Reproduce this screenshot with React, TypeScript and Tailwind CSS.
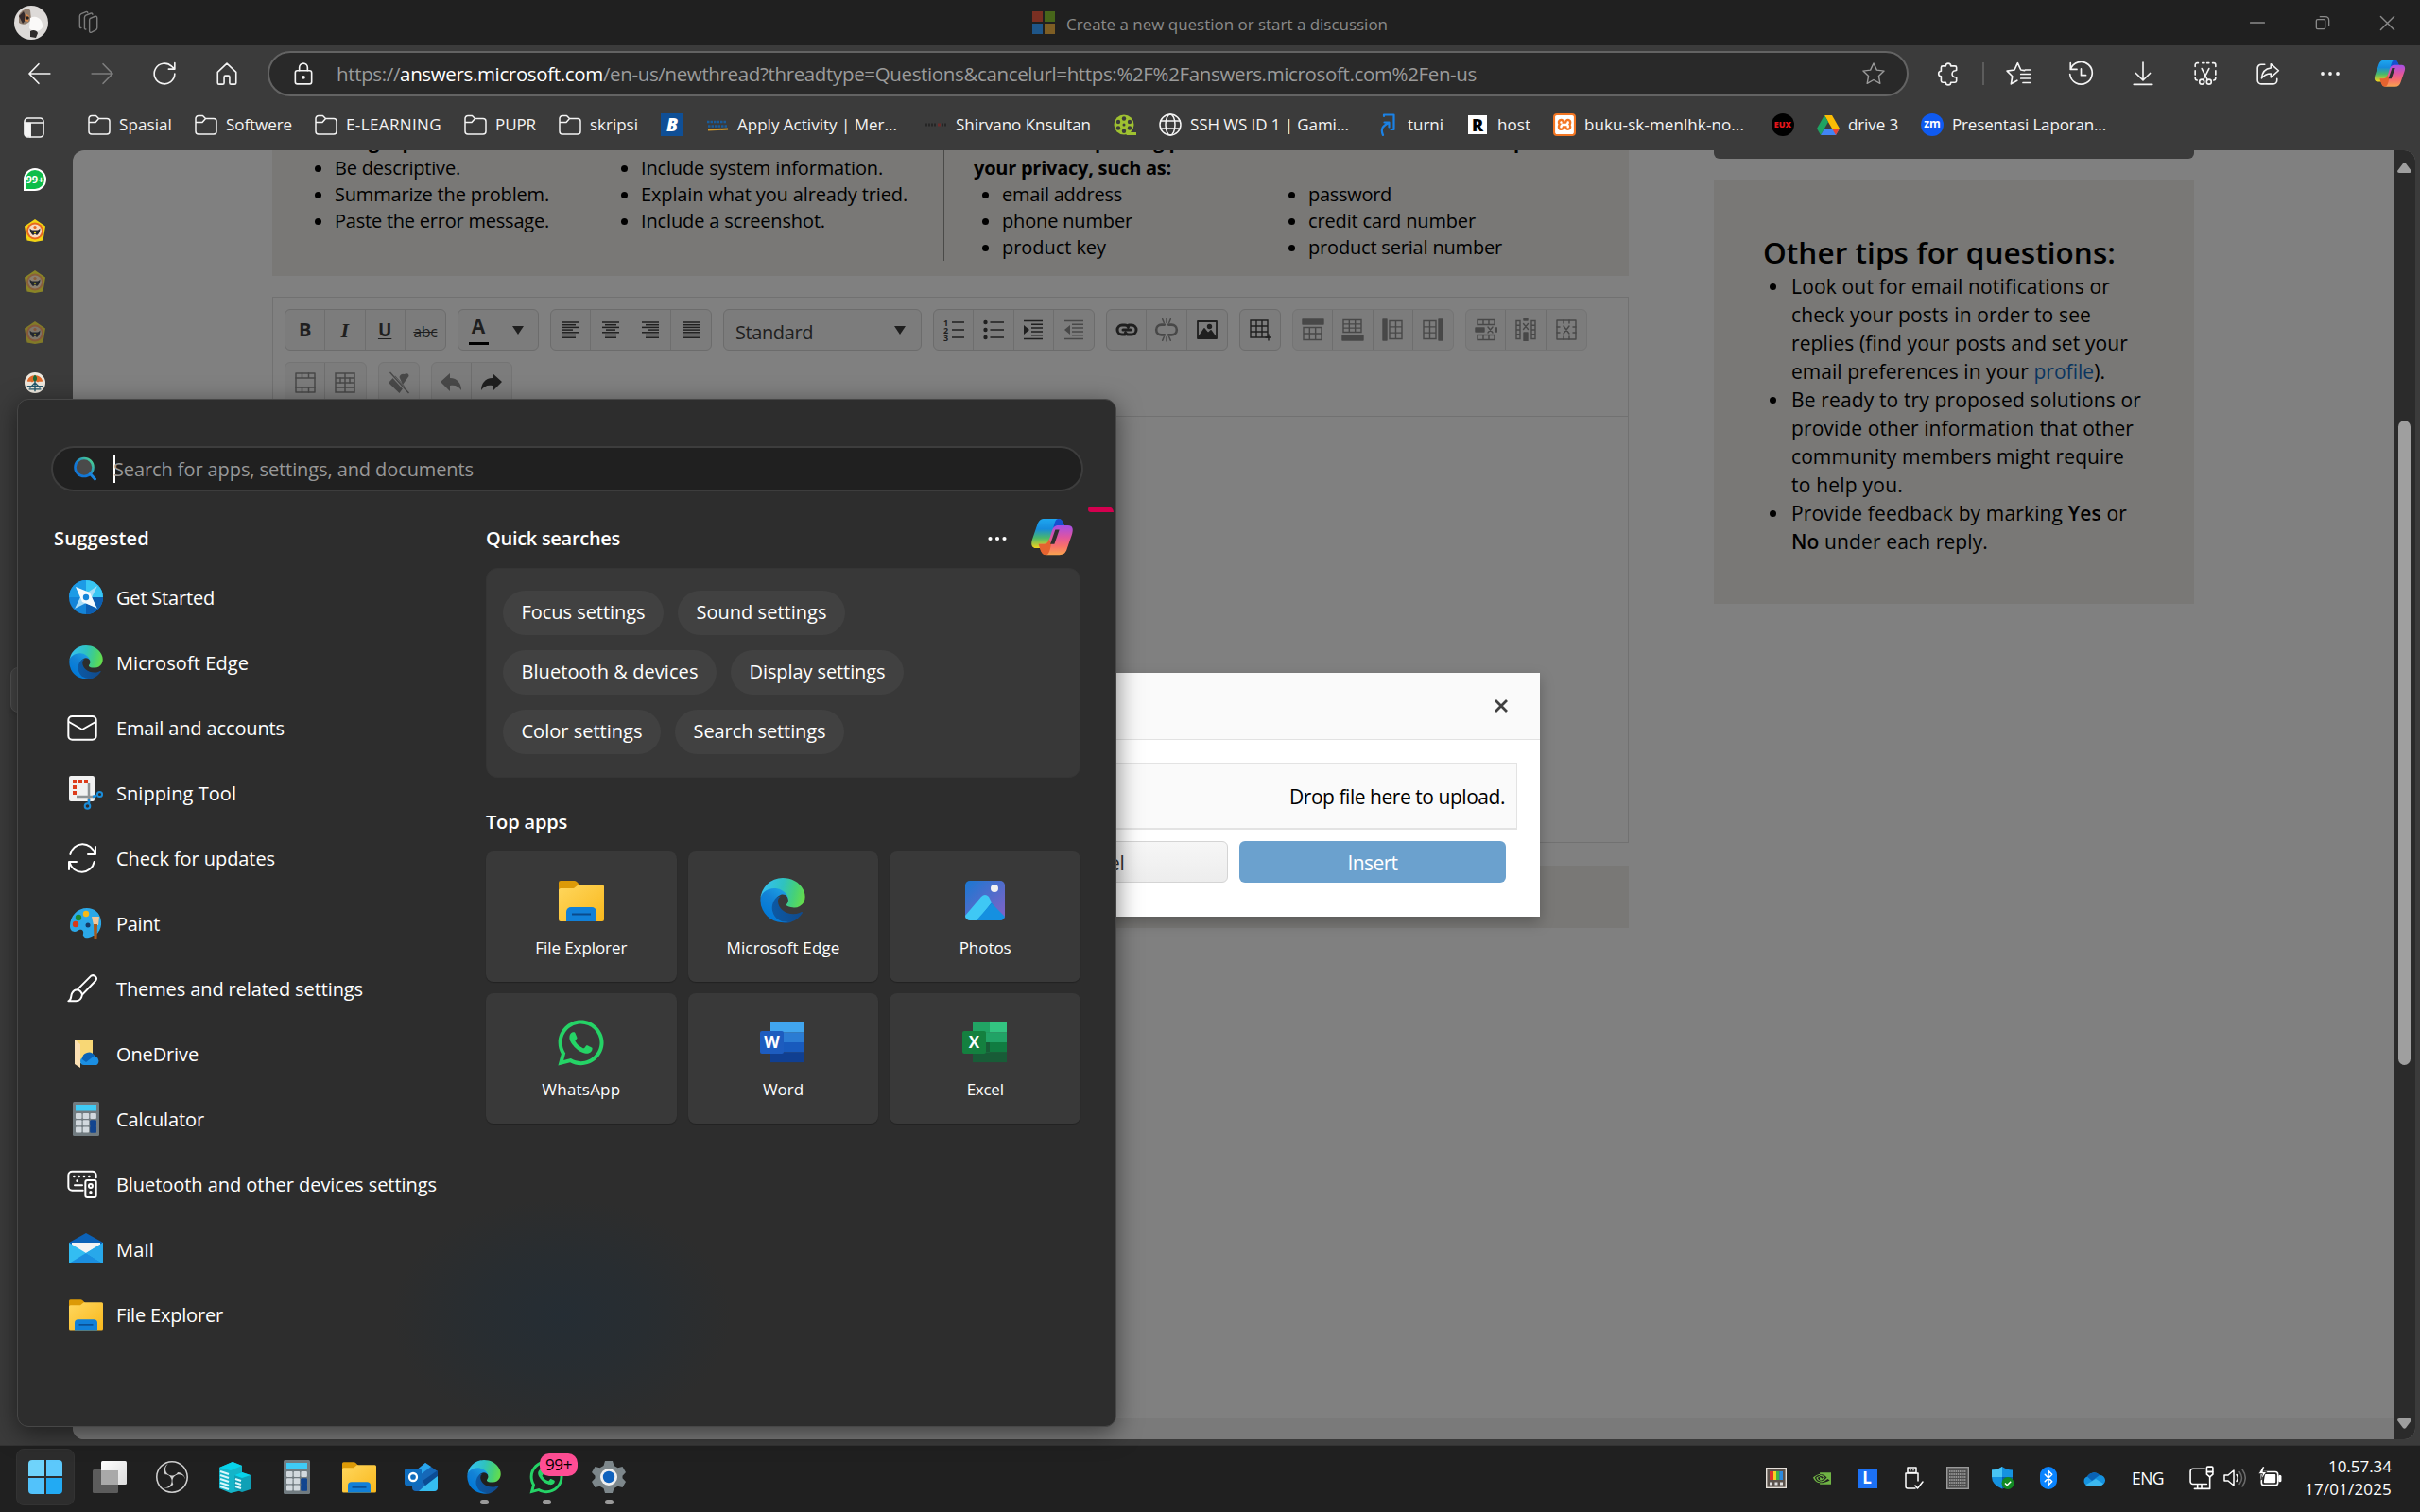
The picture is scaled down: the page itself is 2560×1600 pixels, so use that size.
import React, { useLayoutEffect, useRef } from "react";
import { FaWhatsapp } from "react-icons/fa";
import { SiNvidia, SiObsstudio, SiXampp } from "react-icons/si";
import { LuBluetooth } from "react-icons/lu";

type Kids = { children?: React.ReactNode };

/* Text set to a given advance width by distributing letter spacing. */
function Fit({ t, w, className = "" }: { t: React.ReactNode; w: number; className?: string }) {
  const ref = useRef<HTMLSpanElement>(null);
  useLayoutEffect(() => {
    const el = ref.current;
    if (!el) return;
    el.style.letterSpacing = "0px";
    const natural = el.getBoundingClientRect().width;
    const n = (el.textContent || "").length || 1;
    el.style.letterSpacing = `${(w - natural) / n}px`;
  }, [w]);
  return (
    <span ref={ref} className={`inline-block shrink-0 whitespace-nowrap ${className}`}>
      {t}
    </span>
  );
}

function Ico({ w = 24, h, vb = "0 0 24 24", sw = 1.5, className = "", children }: Kids & { w?: number; h?: number; vb?: string; sw?: number; className?: string }) {
  return (
    <svg width={w} height={h ?? w} viewBox={vb} fill="none" stroke="currentColor" strokeWidth={sw} strokeLinecap="round" strokeLinejoin="round" className={`block shrink-0 ${className}`}>
      {children}
    </svg>
  );
}

function EdgeLogo({ size }: { size: number }) {
  return (
    <svg width={size} height={size} viewBox="0 0 256 260" className="block shrink-0">
      <defs>
        <linearGradient id="ea" x1="63" y1="178" x2="241" y2="178" gradientUnits="userSpaceOnUse">
          <stop offset="0" stopColor="#0c59a4" />
          <stop offset="1" stopColor="#114a8b" />
        </linearGradient>
        <linearGradient id="eb" x1="150" y1="90" x2="45" y2="235" gradientUnits="userSpaceOnUse">
          <stop offset="0" stopColor="#1b9de2" />
          <stop offset=".4" stopColor="#1382d6" />
          <stop offset="1" stopColor="#0078d7" />
        </linearGradient>
        <linearGradient id="ec" x1="10" y1="60" x2="250" y2="120" gradientUnits="userSpaceOnUse">
          <stop offset="0" stopColor="#35c1f1" />
          <stop offset=".45" stopColor="#2fc2c0" />
          <stop offset=".75" stopColor="#45d07a" />
          <stop offset="1" stopColor="#66dd4a" />
        </linearGradient>
      </defs>
      <path fill="url(#ea)" d="M235.68 195.46a93.73 93.73 0 0 1-10.54 4.71 101.87 101.87 0 0 1-35.9 6.46c-47.32 0-88.54-32.55-88.54-74.32A31.48 31.48 0 0 1 117.13 105c-42.8 1.8-53.8 46.4-53.8 72.53 0 73.88 68.09 81.37 82.76 81.37 7.91 0 19.84-2.3 27-4.56l1.31-.44a128.34 128.34 0 0 0 66.6-52.8 4 4 0 0 0-5.32-5.64z" />
      <path fill="url(#eb)" d="M105.73 241.42A79.2 79.2 0 0 1 83 220.08a80.72 80.72 0 0 1 29.53-120.8c3.12-1.47 8.45-4.13 15.54-4a32.35 32.35 0 0 1 25.69 13 31.88 31.88 0 0 1 6.36 18.66c0-.21 24.46-79.6-80-79.6-43.9 0-80 41.66-80 78.21a130.15 130.15 0 0 0 12.11 56 128 128 0 0 0 156.38 67.11 75.55 75.55 0 0 1-62.78-8z" />
      <path fill="url(#ec)" d="M152.33 148.86c-.81 1.05-3.3 2.5-3.3 5.66 0 2.61 1.7 5.12 4.72 7.23 14.38 10 41.49 8.68 41.56 8.68a59.56 59.56 0 0 0 30.27-8.35 61.38 61.38 0 0 0 30.43-52.88c.26-22.41-8-37.31-11.34-43.91C223.42 23.73 177.72 0 128 0A128 128 0 0 0 0 126.2c.48-36.54 36.8-66.05 80-66.05 3.5 0 23.46.34 42 10.07 16.34 8.58 24.9 18.94 30.85 29.21 6.18 10.67 7.28 24.15 7.28 29.52s-2.74 13.33-7.8 19.91z" />
    </svg>
  );
}

function CopilotLogo({ w }: { w: number }) {
  const ribbon = "M16 2h14c4.500 0 5.500 3 7 7l1.500 5h-5c-4 0-5.500 2-6.500 5.500l-3 9.500c-1.500 4-3.500 5.500-7 5.500H6.500c-5.500 0-6-4.500-4.500-9.500L7.500 9c1.500-5 4-7 8.500-7z";
  return (
    <svg width={w} height={(w * 44) / 48} viewBox="0 0 48 44" className="block shrink-0">
      <defs>
        <linearGradient id="ca" x1="0" y1="0" x2="0" y2="1">
          <stop offset="0" stopColor="#1ea7f0" />
          <stop offset=".35" stopColor="#168bdc" />
          <stop offset=".65" stopColor="#4bb86a" />
          <stop offset="1" stopColor="#f5d31c" />
        </linearGradient>
        <linearGradient id="cb" x1="0" y1="1" x2="0" y2="0">
          <stop offset="0" stopColor="#a44fe6" />
          <stop offset=".4" stopColor="#e0559f" />
          <stop offset=".7" stopColor="#f8706a" />
          <stop offset="1" stopColor="#f9a44f" />
        </linearGradient>
      </defs>
      <path d={ribbon} fill="url(#ca)" />
      <path d="M25 14c1.500-7 2.500-12 6-12 4 0 5 3 6.500 7l1.500 5h-5c-4 0-5.500 2-6.500 5.500z" fill="#1650cf" />
      <g transform="rotate(180 24 22)">
        <path d={ribbon} fill="url(#cb)" />
        <path d="M25 14c1.500-7 2.500-12 6-12 4 0 5 3 6.500 7l1.500 5h-5c-4 0-5.500 2-6.500 5.500z" fill="#e5632f" />
      </g>
      <path d="M27.500 14h4.500l-5.500 16H22z" fill="#2f2f2f" />
    </svg>
  );
}

function FolderLogo({ size }: { size: number }) {
  return (
    <svg width={size} height={size} viewBox="0 0 48 48" className="block shrink-0">
      <defs>
        <linearGradient id="fa" x1="0" y1="0" x2="1" y2="1">
          <stop offset="0" stopColor="#ffd75e" />
          <stop offset="1" stopColor="#f9b81c" />
        </linearGradient>
      </defs>
      <path d="M0 5a2 2 0 0 1 2-2h14a4 4 0 0 1 3 1l4 4v6H0z" fill="#dc9a07" />
      <path d="M0 13c0-1 1-2 2-2h14l5-4h25a2 2 0 0 1 2 2v35a2 2 0 0 1-2 2H2a2 2 0 0 1-2-2z" fill="url(#fa)" />
      <path d="M8 46V36a5 5 0 0 1 5-5h22a5 5 0 0 1 5 5v10z" fill="#1180d8" />
      <path d="M14 38.500h20" stroke="#0a4a8c" strokeWidth="2" />
    </svg>
  );
}

function CalcLogo({ size }: { size: number }) {
  return (
    <svg width={size} height={size} viewBox="0 0 36 36" className="block shrink-0">
      <rect x="4" y="0" width="28" height="36" rx="1.500" fill="#717b80" />
      <rect x="7" y="3" width="22" height="6.500" fill="#3fcbf6" />
      {[0, 1, 2].map((r) => [0, 1, 2].map((c) => <rect key={`${r}${c}`} x={7 + c * 7.700} y={12 + r * 7.300} width="6.500" height="6" rx="1" fill={c === 2 && r > 0 ? "#12458f" : "#d2d9de"} />))}
      <rect x="22.400" y="20" width="6.500" height="12.500" fill="#12458f" />
    </svg>
  );
}

function OfficeLogo({ letter, c, size = 48 }: { letter: string; c: string[]; size?: number }) {
  return (
    <svg width={size} height={size} viewBox="0 0 48 48" className="block shrink-0">
      {[0, 1, 2, 3].map((i) => (
        <rect key={i} x="11" y={3 + i * 10.500} width="36" height="10.600" fill={c[i]} />
      ))}
      {letter === "X" && <path d="M11 3h18v10.500H11z M11 24h18v10.500H11z" fill="#1d9c5c" opacity=".8" />}
      {letter === "X" && <path d="M11 24h18v10.500H11z" fill="#185c37" />}
      <rect x="0" y="12" width="25" height="24" rx="2" fill={c[4]} />
      <text x="12.500" y="30" textAnchor="middle" fontFamily="Open Sans, sans-serif" fontWeight="700" fontSize="17" fill="#fff">{letter}</text>
    </svg>
  );
}

function MailLogo() {
  return (
    <svg width="36" height="36" viewBox="0 0 36 36" className="block shrink-0">
      <path d="M0 11 18 1l18 10v6H0z" fill="#0b62b8" />
      <path d="M3 11h30v8L18 24 3 19z" fill="#f3f3f3" />
      <path d="M0 11v22h36V11L18 22z" fill="#33bdf2" />
      <path d="M0 33 18 22l18 11z" fill="#1b8fe0" />
      <path d="M36 11v22L18 22z" fill="#28a8ea" />
    </svg>
  );
}

function PaintLogo() {
  return (
    <svg width="36" height="36" viewBox="0 0 36 36" className="block shrink-0">
      <path d="M19 2C9 2 1 10 1 21c0 6 5 7 8 5 4-3 7 0 6 3-1 4 2 6 6 5 8-2 14-9 13-18C33 7 27 2 19 2z" fill="#2ba8e8" />
      <circle cx="10" cy="12" r="3.200" fill="#1d8a34" />
      <circle cx="18" cy="8" r="3.200" fill="#f5b915" />
      <circle cx="7" cy="19" r="3.200" fill="#d9391a" />
      <circle cx="20" cy="20" r="2.500" fill="#143a66" />
      <path d="M24 11h8l-1 9h-5z" fill="#f0c79b" />
      <path d="M26 19h4l-.5 16h-3z" fill="#a9591b" />
    </svg>
  );
}

function GetStartedLogo() {
  return (
    <svg width="36" height="36" viewBox="0 0 36 36" className="block shrink-0">
      <circle cx="18" cy="18" r="18" fill="#1484d8" />
      <path d="M18 0a18 18 0 0 1 18 18H18z" fill="#38c6f4" />
      <path d="M0 18A18 18 0 0 1 18 0v18z" fill="#1d9be6" />
      <path d="M18 36A18 18 0 0 0 36 18H18z" fill="#0c5eb2" />
      <path d="m30 6-6 12 6 12-12-6-12 6 6-12z" fill="#a8dcf7" />
      <path d="m7 7 15 6 7 16-15-6z" fill="#f5fafd" />
      <circle cx="18" cy="18" r="3.200" fill="#1484d8" />
    </svg>
  );
}

function SnipLogo() {
  return (
    <svg width="36" height="36" viewBox="0 0 36 36" className="block shrink-0">
      <rect width="27" height="27" rx="2" fill="#f1f1f1" />
      {[[4, 4], [10, 4], [16, 4], [4, 10], [4, 16]].map(([x, y]) => (
        <rect key={`${x}-${y}`} x={x} y={y} width="4" height="4" fill="#dd3c1c" />
      ))}
      <path d="M21 8v20M8 22h20" stroke="#8f9496" strokeWidth="2.500" />
      <path d="M21 24v5M25 22l4-1" stroke="#1a8ddb" strokeWidth="2.500" />
      <circle cx="19.500" cy="32" r="2.800" fill="none" stroke="#1a8ddb" strokeWidth="2" />
      <circle cx="32.500" cy="19.500" r="2.600" fill="none" stroke="#1a8ddb" strokeWidth="2" />
    </svg>
  );
}

function OneDriveFolder() {
  return (
    <svg width="36" height="36" viewBox="0 0 36 36" className="block shrink-0">
      <path d="M6 3h19v25H10z" fill="#f8d775" />
      <path d="M6 3l6 5v25l-6-4z" fill="#fbe0b4" />
      <path d="M16 30a4 4 0 0 1 0-8 7 7 0 0 1 12-1 5 5 0 0 1 1 9z" fill="#1b8fe3" />
      <path d="M14 24a7 7 0 0 1 13-4l-9 7z" fill="#0a63b5" />
    </svg>
  );
}

function PhotosLogo() {
  return (
    <svg width="48" height="48" viewBox="0 0 48 48" className="block shrink-0">
      <defs>
        <linearGradient id="pa" x1="0" y1="0" x2="1" y2="1">
          <stop offset="0" stopColor="#1a78d2" />
          <stop offset="1" stopColor="#8661c5" />
        </linearGradient>
        <clipPath id="pc"><rect x="3" y="3" width="42" height="42" rx="5" /></clipPath>
      </defs>
      <g clipPath="url(#pc)">
        <rect x="3" y="3" width="42" height="42" fill="url(#pa)" />
        <path d="M24 18 48 48H8z" fill="#1279d2" />
        <path d="M20 20q4-4 8 0l3 6L14 48H3V40z" fill="#3fc8f5" />
        <path d="m31 27 14 14v6H13z" fill="#1590e0" />
      </g>
      <circle cx="34" cy="11" r="4" fill="#f1f1f1" />
    </svg>
  );
}

const seal = (ring: string, mid: string, core: string) => (
  <svg width="24" height="24" viewBox="0 0 24 24" className="block shrink-0">
    <path d="m12 0 11 7.500-2.500 15L12 24l-8.500-1.500L1 7.500z" fill={ring} />
    <circle cx="12" cy="12.500" r="9" fill={mid} />
    <circle cx="12" cy="12.500" r="7" fill={core} />
    <path d="M6.500 9.500c2 2.500 3.500 2 5.500 2s3.500.5 5.500-2c0 3.500-1.500 6-3.500 7.500l-2-1.500-2 1.500c-2-1.500-3.500-4-3.500-7.500z" fill="#22262e" />
    <circle cx="12" cy="8.500" r="1.600" fill={mid} />
    <circle cx="12" cy="14" r="1.200" fill={ring} />
  </svg>
);

/* ---------- browser chrome ---------- */

function TitleBar() {
  return (
    <div className="flex h-12 items-center bg-[#202020] text-[#8a8a8a]">
      <svg width="36" height="36" viewBox="0 0 36 36" className="ml-[15px] block shrink-0">
        <circle cx="18" cy="18" r="18" fill="#dddad8" />
        <path d="M5 10c3-6 9-8 12-5l1 10c-4 5-9 6-13 3z" fill="#8d7b6c" />
        <path d="M5 11l5-5 3 8-4 5z" fill="#33292a" />
        <path d="M12 8l4 3-1 6-4-1z" fill="#d7894c" />
        <circle cx="14" cy="13" r="1.800" fill="#222" />
        <path d="M17 13c7-4 14 2 13 10-3 5-10 5-14 1z" fill="#faf9f8" />
        <path d="M17 27c3-2 7-1 8 2l-2 5-6-1z" fill="#2e2b2a" />
      </svg>
      <Ico w={26} sw={1.300} className="ml-[29px] text-[#7c7c7c]">
        <path d="m14 8 4.500-2c1.500-.6 2.500 0 2.500 1.500V17c0 1-.5 1.800-1.500 2.300l-4 2c-1.200.6-2 0-2-1.300V9.500c0-.7.2-1.200.5-1.500z" />
        <path d="M10 18.500c-.8.200-1.300-.3-1.300-1.200V7c0-1 .5-1.700 1.400-2.200L14.500 3c1.300-.5 2 0 2 1" />
        <path d="M5.500 17c-1 .2-1.500-.4-1.500-1.400V5.500c0-1 .5-1.700 1.500-2.100L10 1.500c1-.4 1.700 0 1.800.8" />
      </Ico>
      <div className="ml-[986px] grid h-6 w-6 grid-cols-2 gap-[2px]">
        <i className="bg-[#7a2f22]" /><i className="bg-[#47661a]" /><i className="bg-[#1f5689]" /><i className="bg-[#7e5e24]" />
      </div>
      <Fit t="Create a new question or start a discussion" w={340} className="ml-3 pt-[3px] text-[17px] text-[#8a8a8a]" />
      <div className="ml-auto flex items-center">
        <span className="flex w-[69px] justify-center"><Ico w={16}><path d="M1 12h22" strokeWidth="2.400" /></Ico></span>
        <span className="flex w-[69px] justify-center">
          <Ico w={16} sw={2}><rect x="2" y="7" width="14" height="15" rx="2" /><path d="M8 2.500h8c4 0 6 2 6 6V17" /></Ico>
        </span>
        <span className="flex w-[69px] justify-center"><Ico w={17} sw={2}><path d="M2 2l20 20M22 2 2 22" /></Ico></span>
      </div>
    </div>
  );
}

const Slot = ({ children, className = "w-[66px]" }: Kids & { className?: string }) => (
  <span className={`flex shrink-0 items-center justify-center ${className}`}>{children}</span>
);

function NavBar() {
  return (
    <div className="flex h-[60px] items-center pl-[9px] text-[#f4f4f4]">
      <Slot><Ico w={26}><path d="M22 12H2M11 2.500 1.800 12 11 21.500" /></Ico></Slot>
      <Slot className="w-[66px] text-[#7e7e7e]"><Ico w={26}><path d="M2 12h20M13 2.500l9.200 9.500-9.200 9.500" /></Ico></Slot>
      <Slot><Ico w={26}><path d="M22 12a10 10 0 1 1-3-7.200L22 7.500M22 1.500v6h-6" /></Ico></Slot>
      <Slot><Ico w={26}><path d="M3 10.500 12 2l9 8.500V21a1.300 1.300 0 0 1-1.300 1.300H16a1.300 1.300 0 0 1-1.300-1.300v-5.500c0-.8-.5-1.500-1.300-1.500h-2.800c-.8 0-1.300.7-1.300 1.500V21A1.300 1.300 0 0 1 8 22.300H4.300A1.300 1.300 0 0 1 3 21z" /></Ico></Slot>
      <div className="ml-[10px] flex h-12 w-[1736px] items-center rounded-full border-2 border-[#636363] bg-[#292929] pl-[23px]">
        <Ico w={26}><rect x="4" y="9" width="16" height="13" rx="2" /><path d="M8 9V6a4 4 0 0 1 8 0v3" /><circle cx="12" cy="15.500" r="1" fill="currentColor" /></Ico>
        <Fit
          w={1206}
          className="ml-[22px] text-[20.500px] text-[#9b9b9b]"
          t={<>https://<span className="text-white">answers.microsoft.com</span>/en-us/newthread?threadtype=Questions&cancelurl=https:%2F%2Fanswers.microsoft.com%2Fen-us</>}
        />
        <Ico w={26} className="mr-[22px] ml-auto text-[#9b9b9b]" sw={1.300}><path d="m12 1.800 3.100 6.600 7.100.9-5.200 5 1.300 7.200L12 18l-6.300 3.500L7 14.300l-5.200-5 7.100-.9z" /></Ico>
      </div>
      <Slot className="ml-[9px] w-[66px]"><Ico w={26}><path d="M20 8.500V6a1.500 1.500 0 0 0-1.500-1.500h-4a2.500 2.500 0 0 0-5 0h-3A1.500 1.500 0 0 0 5 6v3.500a2.500 2.500 0 0 0 0 5V19a1.500 1.500 0 0 0 1.500 1.500h3a2.500 2.500 0 0 0 5 0h4A1.500 1.500 0 0 0 20 19v-3.500h-1a3 3 0 0 1 0-6.500z" /></Ico></Slot>
      <i className="mx-[3px] h-6 w-[2px] shrink-0 bg-[#5c5c5c]" />
      <Slot><Ico w={27}><path d="M17.500 8.500 14 8l-3-6.500L8 8l-7 1 5 5-1.200 7.200L10.500 18M14 12h9M14 16h9M16 20h7M18 8h5" /></Ico></Slot>
      <Slot><Ico w={27}><path d="M2 7.500A10.500 10.500 0 1 1 1.500 12M2 1.500v6h6M12 7v6h4.500" /></Ico></Slot>
      <Slot><Ico w={26}><path d="M12 1v17M5 11.500l7 7 7-7M3 22.500h18" /></Ico></Slot>
      <Slot><Ico w={26}><path d="M2 5V3.500A2 2 0 0 1 4 1.500h1M19 1.500h1a2 2 0 0 1 2 2V5M2 9v4M22 9v4M9 1.500h2M13.500 1.500h2M2 16c0 1.500.5 2.500 2 2.500M22 16c0 1.500-.5 2.500-2 2.500" /><path d="m8.500 7 5.500 11M15.500 7 10 18" /><circle cx="8.500" cy="20" r="2.300" /><circle cx="15.500" cy="20" r="2.300" /></Ico></Slot>
      <Slot><Ico w={26}><path d="M9 3H5.500A3.500 3.500 0 0 0 2 6.500v12A3.500 3.500 0 0 0 5.500 22h12a3.500 3.500 0 0 0 3.500-3.500V17" /><path d="M15 2.500 22.500 9 15 15.500V12c-4 0-6.500 1-9 4.500.5-6 3.500-9.500 9-10z" /></Ico></Slot>
      <Slot><Ico w={24}><g fill="currentColor" stroke="none"><circle cx="4" cy="12" r="1.900" /><circle cx="12" cy="12" r="1.900" /><circle cx="20" cy="12" r="1.900" /></g></Ico></Slot>
      <Slot className="w-[60px]"><CopilotLogo w={34} /></Slot>
    </div>
  );
}

const FolderGlyph = () => (
  <Ico w={24} sw={1.500}><path d="M1 5.500a3 3 0 0 1 3-3h4.500l3 3H20a3 3 0 0 1 3 3V19a3 3 0 0 1-3 3H4a3 3 0 0 1-3-3zM1 9.500h7L11.500 5.500" /></Ico>
);

const bookmarks: { icon: React.ReactNode; t?: string; w?: number; tail?: boolean }[] = [
  { icon: <FolderGlyph />, t: "Spasial", w: 56 },
  { icon: <FolderGlyph />, t: "Softwere", w: 70 },
  { icon: <FolderGlyph />, t: "E-LEARNING", w: 101 },
  { icon: <FolderGlyph />, t: "PUPR", w: 43 },
  { icon: <FolderGlyph />, t: "skripsi", w: 51 },
  { icon: <span className="flex h-6 w-6 items-center justify-center bg-[#0f4f96] text-[19px] font-extrabold italic text-white">B</span> },
  {
    icon: (
      <svg width="24" height="24" viewBox="0 0 24 24" className="block">
        <path d="M1 9h20M2 13.500h20" stroke="#1a5c99" strokeWidth="2.600" strokeDasharray="2.500 1" />
        <path d="M2 17.500l21-1" stroke="#d39a2b" strokeWidth="2" />
      </svg>
    ), t: "Apply Activity | Mer...", w: 169, tail: true,
  },
  {
    icon: (
      <svg width="24" height="24" viewBox="0 0 24 24" className="block">
        <path d="M1 12h12M18 12h5" stroke="#262626" strokeWidth="3" strokeDasharray="2 1" />
        <path d="M14 12h3" stroke="#6a2a2a" strokeWidth="3" />
      </svg>
    ), t: "Shirvano Knsultan", w: 143,
  },
  {
    icon: (
      <svg width="24" height="24" viewBox="0 0 24 24" className="block">
        <circle cx="11" cy="12" r="10.500" fill="#9fc131" />
        <path d="M12 20h12v3H14z" fill="#9fc131" />
        {[[11, 5.500], [5, 9], [17, 9], [5, 15.500], [17, 15.500], [11, 18.800]].map(([x, y]) => <circle key={`${x}${y}`} cx={x} cy={y} r="2.200" fill="#3b3b3b" />)}
        <circle cx="11" cy="12" r="1.500" fill="#3b3b3b" />
      </svg>
    ),
  },
  { icon: <Ico w={24}><circle cx="12" cy="12" r="11" /><ellipse cx="12" cy="12" rx="5" ry="11" /><path d="M2 8h20M2 16h20" /></Ico>, t: "SSH WS ID 1 | Gami...", w: 168, tail: true },
  {
    icon: <Ico w={24} sw={2.200} className="text-[#1b82e6]"><path d="M8 3V1.500h10.500V17h-3M7 23c-3-7 0-10 6-13M8.500 9.500h5v5" /></Ico>, t: "turni", w: 38,
  },
  { icon: <span className="flex h-[22px] w-6 items-center justify-center"><span className="flex h-[20px] w-[20px] items-center justify-center bg-white text-[18px] font-extrabold text-black">R</span></span>, t: "host", w: 35 },
  { icon: <span className="flex h-6 w-6 items-center justify-center rounded-sm bg-[#f37623]"><SiXampp size={20} color="#fff" /></span>, t: "buku-sk-menlhk-no...", w: 169, tail: true },
  { icon: <span className="flex h-6 w-6 items-center justify-center rounded-full bg-black text-[9px] font-extrabold text-[#e3161c]">EUX</span> },
  {
    icon: (
      <svg width="24" height="22" viewBox="0 0 24 22" className="block">
        <path d="M8 1h8l8 14h-8z" fill="#fbbc05" /><path d="M8 1l4 7-8 14-4-7z" fill="#1ea362" /><path d="M4 22l4-7h16l-4 7z" fill="#4285f4" /><path d="M24 15l-4 7-4-7z" fill="#ea4335" />
      </svg>
    ), t: "drive 3", w: 53,
  },
  { icon: <span className="flex h-6 w-6 items-center justify-center rounded-full bg-[#0f5af0] pb-[2px] text-[12px] font-bold text-white">zm</span>, t: "Presentasi Laporan...", w: 163 },
];

function BookmarksBar() {
  return (
    <div className="flex h-[51px] items-center pb-[3px] text-[17px] text-[#f4f4f4]">
      <Ico w={24} className="mt-[6px] mr-[45px] ml-6" sw={1.600}><rect x="2" y="2" width="20" height="20" rx="3.500" /><path d="M2 7h20M8 7v15" /><path d="M2.500 7.500H8V21H5q-2.500 0-2.500-2.500z" fill="currentColor" /></Ico>
      <div className="flex items-center gap-6">
        {bookmarks.map((b, i) => (
          <div key={i} className={`flex h-6 items-center gap-[9px] ${b.tail ? "mr-[5px]" : ""}`}>
            {b.icon}
            {b.t && <Fit t={b.t} w={b.w || 0} />}
          </div>
        ))}
      </div>
    </div>
  );
}

function SideRail() {
  return (
    <div className="flex w-[77px] shrink-0 flex-col items-center gap-[30px] pt-[19px] pr-[3px]">
      <span className="flex h-6 w-6 items-center justify-center rounded-full rounded-bl-none border-2 border-white bg-[#0dbd49] text-[11px] font-bold text-white">99+</span>
      {seal("#f2d414", "#e8681e", "#f6d9c0")}
      {seal("#8a8526", "#8a5f3a", "#8a7f70")}
      {seal("#827a28", "#86583a", "#7d766a")}
      <svg width="22" height="22" viewBox="0 0 24 24" className="block">
        <circle cx="12" cy="12" r="12" fill="#efe9df" />
        <path d="M3 10a9.500 9.500 0 0 1 18 0c-2.500 1.500-4.500 0-5.500 1.500l-3.500-2-3.500 2C7.500 10 5.500 11.500 3 10z" fill="#df6a2a" />
        <path d="M12 3c3 2 3 6 0 8-3-2-3-6 0-8z" fill="#1e6b38" />
        <path d="M3 16h18M5 19.500h14M12 10v12M12 12l-6 6M12 12l6 6" stroke="#23566b" strokeWidth="1.500" />
      </svg>
    </div>
  );
}

/* ---------- page content ---------- */

const Li = ({ t, w, h = "h-7" }: { t: React.ReactNode; w: number; h?: string }) => (
  <li className={`flex items-center ${h}`}>
    <i className="mr-[14px] h-[7px] w-[7px] shrink-0 rounded-full bg-black" />
    <Fit t={t} w={w} />
  </li>
);

function TipsCard() {
  return (
    <div className="flex h-[133px] overflow-hidden bg-[#797876] text-[20px] leading-7 text-black">
      <div className="h-[117px] w-[711px] shrink-0 border-r border-[#4a4a48] pl-[45px]">
        <div className="-mt-[23px] -ml-3 h-7 font-bold"><Fit t="Posting tips:" w={136} /></div>
        <div className="flex">
          <ul className="w-[324px]">
            <Li t="Be descriptive." w={133} />
            <Li t="Summarize the problem." w={227} />
            <Li t="Paste the error message." w={227} />
          </ul>
          <ul>
            <Li t="Include system information." w={256} />
            <Li t="Explain what you already tried." w={282} />
            <Li t="Include a screenshot." w={195} />
          </ul>
        </div>
      </div>
      <div className="pl-[31px]">
        <div className="-mt-[23px] h-7 font-bold"><Fit t="Please avoid posting personal information that could compromise" w={652} /></div>
        <div className="h-7 font-bold"><Fit t="your privacy, such as:" w={209} /></div>
        <div className="flex pl-[9px]">
          <ul className="w-[324px]">
            <Li t="email address" w={127} />
            <Li t="phone number" w={138} />
            <Li t="product key" w={110} />
          </ul>
          <ul>
            <Li t="password" w={88} />
            <Li t="credit card number" w={177} />
            <Li t="product serial number" w={205} />
          </ul>
        </div>
      </div>
    </div>
  );
}

const Group = ({ children, dim = false }: Kids & { dim?: boolean }) => (
  <div className={`flex h-11 divide-x divide-[#6e6e6e] rounded-md border ${dim ? "border-[#747474]" : "border-[#6c6c6c]"} bg-[#7c7c7c]`}>{children}</div>
);
const Cell = ({ children, dim = false }: Kids & { dim?: boolean }) => (
  <span className={`flex w-[42.250px] items-center justify-center ${dim ? "text-[#484848]" : "text-[#1f1f1f]"}`}>{children}</span>
);

const lines = (xs: [number, number][]) => (
  <Ico w={20} vb="0 0 20 20" sw={1.500}>
    {xs.map(([a, b], i) => <path key={i} d={`M${a} ${2 + i * 2.700}H${b}`} strokeLinecap="butt" />)}
  </Ico>
);

function GridGlyph({ x, y, w, h, cols = 3, rows = 3 }: { x: number; y: number; w: number; h: number; cols?: number; rows?: number }) {
  const d: string[] = [];
  for (let i = 0; i <= cols; i++) d.push(`M${x + (w * i) / cols} ${y}v${h}`);
  for (let i = 0; i <= rows; i++) d.push(`M${x} ${y + (h * i) / rows}h${w}`);
  return <path d={d.join("")} strokeLinecap="square" />;
}

function EditorToolbar() {
  const tri = <svg width="12" height="9" viewBox="0 0 12 9" className="block"><path d="M0 0h12L6 9z" fill="#1f1f1f" /></svg>;
  return (
    <div className="flex h-[126px] flex-col gap-3 border-b border-[#717171] pt-3 pl-3 text-[#1f1f1f]">
      <div className="flex gap-3">
        <Group>
          <Cell><b className="text-[20px]">B</b></Cell>
          <Cell><span className="font-['Liberation_Serif',serif] text-[22px] font-bold italic">I</span></Cell>
          <Cell><b className="text-[19px] underline underline-offset-2">U</b></Cell>
          <Cell><span className="pt-1 text-[16px] tracking-tight line-through">abc</span></Cell>
        </Group>
        <div className="flex h-11 w-[86px] items-center rounded-md border border-[#6c6c6c] bg-[#7c7c7c]">
          <span className="flex w-[42px] flex-col items-center">
            <b className="text-[21px] leading-6">A</b>
            <i className="mt-[5px] h-[3px] w-[21px] bg-black" />
          </span>
          <span className="flex w-[42px] justify-center">{tri}</span>
        </div>
        <Group>
          <Cell>{lines([[1, 19], [1, 15], [1, 19], [1, 12], [1, 19], [1, 15], [1, 15]])}</Cell>
          <Cell>{lines([[1, 19], [4, 16], [1, 19], [5, 15], [1, 19], [4, 16], [4, 16]])}</Cell>
          <Cell>{lines([[1, 19], [5, 19], [1, 19], [8, 19], [1, 19], [5, 19], [5, 19]])}</Cell>
          <Cell>{lines([[1, 19], [1, 19], [1, 19], [1, 19], [1, 19], [1, 19], [1, 19]])}</Cell>
        </Group>
        <div className="flex h-11 w-[210px] items-center justify-between rounded-md border border-[#6c6c6c] bg-[#7c7c7c] pr-4 pl-3">
          <Fit t="Standard" w={82} className="pt-[5px] text-[20px]" />
          {tri}
        </div>
        <Group>
          <Cell>
            <svg width="22" height="24" viewBox="0 0 22 24">
              <path d="M9 4h13M9 12h13M9 20h13" stroke="currentColor" strokeWidth="1.500" />
              {["1", "2", "3"].map((n, i) => <text key={n} x="0" y={7.500 + i * 8} fontSize="9" fontWeight="700" fontFamily="Open Sans, sans-serif" fill="currentColor">{n}</text>)}
            </svg>
          </Cell>
          <Cell>
            <Ico w={22} vb="0 0 22 22"><path d="M8 3h14M8 11h14M8 19h14" /><g fill="currentColor" stroke="none"><circle cx="2.500" cy="3" r="2.200" /><circle cx="2.500" cy="11" r="2.200" /><circle cx="2.500" cy="19" r="2.200" /></g></Ico>
          </Cell>
          <Cell><Ico w={22} vb="0 0 22 22"><path d="M1 1.500h20M9 5.300h12M9 9.100h12M9 12.900h12M9 16.700h12M1 20.500h20" strokeLinecap="butt" /><path d="m1 6 6 5-6 5z" fill="currentColor" stroke="none" /></Ico></Cell>
          <Cell dim><Ico w={22} vb="0 0 22 22"><path d="M1 1.500h20M9 5.300h12M9 9.100h12M9 12.900h12M9 16.700h12M1 20.500h20" strokeLinecap="butt" /><path d="m7 6-6 5 6 5z" fill="currentColor" stroke="none" /></Ico></Cell>
        </Group>
        <Group>
          <Cell><Ico w={24} sw={3}><path d="M10 17H7a5 5 0 0 1 0-10h3c2 0 3 1 3.500 2M14 7h3a5 5 0 0 1 0 10h-3c-2 0-3-1-3.500-2M8 12h8" /></Ico></Cell>
          <Cell dim><Ico w={26} sw={2.400}><path d="M10 17H7a5 5 0 0 1 0-10h3M14 7h3a5 5 0 0 1 0 10h-3" /><path d="M12 1v4M8 1.500 9.500 5M16 1.500 14.500 5M12 19v4M8 22.500 9.500 19M16 22.500 14.500 19" strokeWidth="1.300" /></Ico></Cell>
          <Cell><Ico w={22} vb="0 0 22 22" sw={1.800}><rect x="1" y="2" width="20" height="18" /><path d="m2 19 6-9 4 5 3-3 5 7z" fill="currentColor" /><circle cx="13.500" cy="7.500" r="1.800" fill="currentColor" /></Ico></Cell>
        </Group>
        <Group><Cell><Ico w={24} sw={1.400}><GridGlyph x={2} y={2} w={18} h={18} /><path d="M21 17v6M18 20h6" /></Ico></Cell></Group>
        <Group dim>
          <Cell dim><Ico w={24} sw={1.400}><rect x="1" y="1" width="22" height="5" fill="currentColor" /><GridGlyph x={2} y={9.500} w={19} h={13} rows={2} /></Ico></Cell>
          <Cell dim><Ico w={24} sw={1.400}><rect x="1" y="18" width="22" height="5" fill="currentColor" /><GridGlyph x={2} y={1.500} w={19} h={13} /></Ico></Cell>
          <Cell dim><Ico w={24} sw={1.400}><rect x="2" y="1" width="4" height="22" fill="currentColor" /><GridGlyph x={9} y={2.500} w={13} h={19} cols={2} /></Ico></Cell>
          <Cell dim><Ico w={24} sw={1.400}><rect x="18" y="1" width="4" height="22" fill="currentColor" /><GridGlyph x={2} y={2.500} w={13} h={19} cols={2} /></Ico></Cell>
        </Group>
        <Group dim>
          <Cell dim><Ico w={24} sw={1.400}><GridGlyph x={3} y={1.500} w={18} h={5} rows={1} /><GridGlyph x={3} y={17.500} w={18} h={5} rows={1} /><path d="M1 10h9v4H1zM22 10h1.500v4H22z" fill="currentColor" /><path d="m14 9 5 6M19 9l-5 6" /></Ico></Cell>
          <Cell dim><Ico w={24} sw={1.400}><GridGlyph x={2} y={2.500} w={4} h={19} cols={1} rows={4} /><GridGlyph x={18} y={2.500} w={4} h={19} cols={1} rows={4} /><path d="M10 15h4v8.500h-4zM10 .5h4V2h-4z" fill="currentColor" /><path d="m9.500 5.500 5 6M14.500 5.500l-5 6" /></Ico></Cell>
          <Cell dim><Ico w={24} sw={1.400}><rect x="2" y="2" width="20" height="20" /><path d="M9 2v3M15 2v3M9 19v3M15 19v3M2 9h3M2 15h3M19 9h3M19 15h3M9 8l6 8M15 8l-6 8" /></Ico></Cell>
        </Group>
      </div>
      <div className="flex gap-3">
        <Group dim>
          <Cell dim><Ico w={24} sw={1.500}><rect x="2" y="2" width="20" height="20" /><path d="M2 7h20M2 17h20M8.500 2v5M15.500 2v5M8.500 17v5M15.500 17v5" /></Ico></Cell>
          <Cell dim><Ico w={24} sw={1.500}><GridGlyph x={2} y={2} w={20} h={20} cols={2} rows={4} /><path d="M7 7v5M17 7v5" /></Ico></Cell>
        </Group>
        <Group dim>
          <Cell dim><svg width="24" height="24" viewBox="0 0 24 24"><path d="M1 12 8 4.500l10 11-5.500 7.500z" fill="currentColor" /><path d="M12.500 6q1.500-4 5-3 5-2 5 2L16 14z" fill="currentColor" /><path d="M2 1l20 22" stroke="#7c7c7c" strokeWidth="3" /><path d="M2.500 1l20 22" stroke="currentColor" strokeWidth="1.400" /></svg></Cell>
        </Group>
        <Group dim>
          <Cell dim><svg width="22" height="22" viewBox="0 0 22 22"><path d="M0 10 10 1v5c8 0 12 6 12 13-3-4-6-6-12-5v6z" fill="currentColor" /></svg></Cell>
          <Cell><svg width="22" height="22" viewBox="0 0 22 22"><path d="M22 10 12 1v5C4 6 0 12 0 19c3-4 6-6 12-5v6z" fill="currentColor" /></svg></Cell>
        </Group>
      </div>
    </div>
  );
}

const tips: { b?: boolean; t: React.ReactNode; w: number }[] = [
  { b: true, t: "Look out for email notifications or", w: 337 },
  { t: "check your posts in order to see", w: 317 },
  { t: "replies (find your posts and set your", w: 356 },
  { t: <>email preferences in your <span className="text-[#0a3560]">profile</span>).</>, w: 332 },
  { b: true, t: "Be ready to try proposed solutions or", w: 370 },
  { t: "provide other information that other", w: 362 },
  { t: "community members might require", w: 352 },
  { t: "to help you.", w: 118 },
  { b: true, t: <>Provide feedback by marking <b className="font-semibold">Yes</b> or</>, w: 355 },
  { t: <><b className="font-semibold">No</b> under each reply.</>, w: 208 },
];

function Page() {
  return (
    <div className="flex h-[1364px] w-[2478px] overflow-hidden rounded-xl bg-[#808080]">
      <div className="flex w-[2455px] shrink-0 flex-col">
        <div className="flex flex-1 pl-[211px]">
          <div className="w-[1435px] shrink-0">
            <TipsCard />
            <div className="mt-[22px] h-[578px] border border-[#717171]">
              <EditorToolbar />
            </div>
            <div className="mt-6 h-[66px] bg-[#797876]" />
          </div>
          <div className="ml-[90px] w-[508px]">
            <div className="h-[9px] rounded-b-md bg-[#3b3b3b]" />
            <div className="mt-[22px] h-[449px] bg-[#797876] pt-[55px] pl-[52px] text-black">
              <Fit t="Other tips for questions:" w={373} className="block h-[43px] text-[31.500px] leading-[43px] font-semibold" />
              <ul className="text-[21px] leading-[30px]">
                {tips.map((l, i) => (
                  <li key={i} className="flex h-[30px] items-center pl-[7px]">
                    <i className={`mr-4 h-[7px] w-[7px] rounded-full ${l.b ? "bg-black" : ""}`} />
                    <Fit t={l.t} w={l.w} />
                  </li>
                ))}
              </ul>
            </div>
          </div>
        </div>
        <div className="h-[22px] bg-[#7a7a7a]" />
      </div>
      <div className="flex w-[23px] flex-col items-center bg-[#2b2b2b]">
        <svg width="15" height="11" viewBox="0 0 15 11" className="mt-[13px] block"><path d="M6 1q1.500-1.500 3 0l6 8q0 2-2 2H2q-2 0-2-2z" fill="#9f9f9f" /></svg>
        <div className="mt-[262px] h-[682px] w-[13px] rounded-full bg-[#9f9f9f]" />
        <svg width="15" height="11" viewBox="0 0 15 11" className="mt-auto mb-[11px] block"><path d="M6 10q1.500 1.500 3 0l6-8q0-2-2-2H2Q0 0 0 2z" fill="#9f9f9f" /></svg>
      </div>
    </div>
  );
}

function UploadDialog() {
  return (
    <div className="absolute top-[712px] left-[979px] h-[258px] w-[650px] bg-white text-[21px] shadow-[0_6px_14px_rgba(0,0,0,0.25)]">
      <div className="flex h-[71px] items-center justify-end border-b border-[#e2e2e2] bg-[#fafafa] pr-[33px]">
        <Ico w={16} sw={4.200} className="text-[#404040]"><path d="M3 3l18 18M21 3 3 21" strokeLinecap="butt" /></Ico>
      </div>
      <div className="mx-6 mt-6 flex h-[71px] items-center justify-end border border-b-2 border-[#e3e3e3] bg-[#fafafa] pt-1 pr-3">
        <Fit t="Drop file here to upload." w={228} className="text-black" />
      </div>
      <div className="mt-3 flex justify-end gap-3 pr-9">
        <div className="flex h-11 w-[282px] items-center justify-center rounded-md border border-[#d4d4d4] bg-linear-to-b from-[#f6f6f6] to-[#ededed] pt-1 text-[#333]"><Fit t="Cancel" w={63} /></div>
        <div className="flex h-11 w-[282px] items-center justify-center rounded-md bg-[#6ba1ce] pt-1 text-white"><Fit t="Insert" w={53} /></div>
      </div>
    </div>
  );
}

/* ---------- search flyout ---------- */

const suggested: { icon: React.ReactNode; mono?: boolean; t: string; w: number }[] = [
  { icon: <GetStartedLogo />, t: "Get Started", w: 104 },
  { icon: <EdgeLogo size={36} />, t: "Microsoft Edge", w: 140 },
  { mono: true, icon: <Ico w={32}><rect x="1" y="3" width="22" height="18.500" rx="3" /><path d="m1.500 7.500 10.500 6 10.500-6" /></Ico>, t: "Email and accounts", w: 178 },
  { icon: <SnipLogo />, t: "Snipping Tool", w: 127 },
  { mono: true, icon: <Ico w={32}><path d="M2.500 9A10 10 0 0 1 22 8.500M22.500 3v6h-6M21.500 15A10 10 0 0 1 2 15.500M1.500 21v-6h6" /></Ico>, t: "Check for updates", w: 168 },
  { icon: <PaintLogo />, t: "Paint", w: 46 },
  { mono: true, icon: <Ico w={32}><path d="M8 13 19 2q2-1 3.500.5T22.500 6L12 17M8 13q3 .5 4 4-1 5-5 5H1c3-1 1.500-4 3-6.500Q5.500 13 8 13z" /></Ico>, t: "Themes and related settings", w: 261 },
  { icon: <OneDriveFolder />, t: "OneDrive", w: 87 },
  { icon: <CalcLogo size={36} />, t: "Calculator", w: 93 },
  { mono: true, icon: <Ico w={32}><path d="M12.500 17H4a3 3 0 0 1-3-3V5a3 3 0 0 1 3-3h16a3 3 0 0 1 3 3v2M6 13h6" /><path d="M5.500 6h.01M9.500 6h.01M13.500 6h.01M17.500 6h.01M8 9.500h.01" strokeWidth="2" /><rect x="14.500" y="9" width="8.500" height="13.500" rx="1.500" /><circle cx="18.700" cy="13.500" r="1.500" /><path d="M18.700 18.500h.01" strokeWidth="2.500" /></Ico>, t: "Bluetooth and other devices settings", w: 339 },
  { icon: <MailLogo />, t: "Mail", w: 40 },
  { icon: <FolderLogo size={36} />, t: "File Explorer", w: 113 },
];

const pills: [string, number][][] = [
  [["Focus settings", 131], ["Sound settings", 138]],
  [["Bluetooth & devices", 187], ["Display settings", 144]],
  [["Color settings", 128], ["Search settings", 140]],
];

const topApps: { icon: React.ReactNode; t: string; w: number }[] = [
  { icon: <FolderLogo size={48} />, t: "File Explorer", w: 97 },
  { icon: <EdgeLogo size={48} />, t: "Microsoft Edge", w: 120 },
  { icon: <PhotosLogo />, t: "Photos", w: 55 },
  { icon: <FaWhatsapp size={55} color="#25d366" className="-m-1 block" />, t: "WhatsApp", w: 83 },
  { icon: <OfficeLogo letter="W" c={["#41a5ee", "#2b7cd3", "#185abd", "#103f91", "#1d5cbf"]} />, t: "Word", w: 43 },
  { icon: <OfficeLogo letter="X" c={["#33c481", "#21a366", "#107c41", "#185c37", "#14803f"]} />, t: "Excel", w: 39 },
];

function SearchFlyout() {
  return (
    <div className="absolute top-[422px] left-[18px] h-[1088px] w-[1163px] rounded-xl border border-[#474747] bg-[#2d2d2d] bg-[radial-gradient(ellipse_180px_125px_at_575px_970px,#252d34_0%,#282d31_50%,transparent_100%)] pt-[49px] pl-[35px] text-[20px] text-white shadow-[0_6px_26px_rgba(0,0,0,0.5)]">
      <div className="flex h-12 w-[1092px] items-center rounded-full border-2 border-[#3d3d3d] bg-[#202020] pl-[21px]">
        <svg width="26" height="26" viewBox="0 0 26 26" className="block">
          <defs><linearGradient id="sg" x1="0" y1="1" x2="1" y2="0"><stop offset=".4" stopColor="#1277d6" /><stop offset="1" stopColor="#55e085" /></linearGradient></defs>
          <circle cx="12" cy="11.500" r="9.500" fill="#4a4a4a" stroke="url(#sg)" strokeWidth="2.600" />
          <path d="m18.500 18.500 5 5.500" stroke="#1a86e0" strokeWidth="3" strokeLinecap="round" />
        </svg>
        <i className="ml-[17px] h-[29px] w-[2px] bg-white" />
        <Fit t="Search for apps, settings, and documents" w={381} className="-ml-[2px] pt-[2px] text-[20px] text-[#989898]" />
      </div>
      <div className="flex">
        <div className="w-[460px] pt-[34px]">
          <div className="flex h-8 items-center pl-[3px] font-semibold"><Fit t="Suggested" w={101} /></div>
          <div className="pt-[11px]">
            {suggested.map((s) => (
              <div key={s.t} className="flex h-[69px] items-center pl-[19px]">
                <span className="flex w-9 justify-start">{s.mono ? <span className="-ml-[2px]">{s.icon}</span> : s.icon}</span>
                <Fit t={s.t} w={s.w} className="ml-[14px] pt-[3px]" />
              </div>
            ))}
          </div>
        </div>
        <div className="w-[629px] pt-[34px]">
          <div className="flex h-8 items-center font-semibold">
            <Fit t="Quick searches" w={142} />
            <Ico w={20} className="ml-auto"><g fill="currentColor" stroke="none"><circle cx="3" cy="12" r="2.500" /><circle cx="12" cy="12" r="2.500" /><circle cx="21" cy="12" r="2.500" /></g></Ico>
            <span className="-mt-[4px] mr-[7px] ml-[25px]"><CopilotLogo w={46} /></span>
          </div>
          <div className="mt-[15px] flex h-[222px] flex-col gap-4 rounded-xl border border-[#353535] bg-[#383838] pt-[23px] pl-[17px]">
            {pills.map((row, i) => (
              <div key={i} className="flex gap-[15px]">
                {row.map(([t, w]) => (
                  <span key={t} className="flex h-[47px] items-center rounded-full bg-[#414141] px-[19.500px] pb-[1px]"><Fit t={t} w={w} /></span>
                ))}
              </div>
            ))}
          </div>
          <div className="mt-[31px] flex h-8 items-center font-semibold"><Fit t="Top apps" w={86} /></div>
          <div className="mt-[15px] grid grid-cols-3 gap-3">
            {topApps.map((a) => (
              <div key={a.t} className="flex h-[138px] flex-col items-center rounded-lg bg-[#393939] pt-[28px] text-[17px] shadow-[0_1px_1px_rgba(0,0,0,0.25)]">
                <span className="flex h-12 items-center">{a.icon}</span>
                <Fit t={a.t} w={a.w} className="mt-[13px]" />
              </div>
            ))}
          </div>
        </div>
      </div>
      <i className="absolute top-[113px] right-[2px] h-[6px] w-[27px] rounded-l-sm rounded-tr-lg bg-[#d4004f]" />
    </div>
  );
}

/* ---------- taskbar ---------- */

function Taskbar() {
  const apps: { icon: React.ReactNode; run?: boolean }[] = [
    {
      icon: (
        <svg width="36" height="36" viewBox="0 0 36 36" className="block">
          <defs><linearGradient id="tv" x1="0" y1="0" x2="1" y2="1"><stop offset="0" stopColor="#fff" /><stop offset="1" stopColor="#dcdcdc" /></linearGradient></defs>
          <rect x="0" y="10" width="27" height="25" rx="1.500" fill="#5c5c5c" /><rect x="9" y="1" width="27" height="25" rx="1.500" fill="url(#tv)" /><rect x="9" y="11" width="18" height="15" fill="#a9a9a9" />
        </svg>
      ),
    },
    { icon: <SiObsstudio size={34} color="#cfcfcf" /> },
    {
      icon: (
        <svg width="34" height="34" viewBox="0 0 34 34" className="block">
          <path d="M1 7 15 1l10 4v26l-12 3-12-5z" fill="#14b4c8" /><path d="M1 7 15 1l10 4-12 5z" fill="#08d3ea" />
          <path d="M2 11l9 3M2 15l9 3M2 19l9 3M2 23l9 3M2 27l9 3" stroke="#d9f7fb" strokeWidth="2" />
          <path d="M17 15l8-3 9 3v15l-9 3-8-3z" fill="#0fa0b6" /><path d="M17 15l8-3 9 3-9 3z" fill="#08d3ea" /><path d="M18 19l6 2M18 23l6 2M18 27l6 2" stroke="#d9f7fb" strokeWidth="2" />
        </svg>
      ),
    },
    { icon: <CalcLogo size={36} /> },
    { icon: <FolderLogo size={36} /> },
    {
      icon: (
        <svg width="36" height="36" viewBox="0 0 36 36" className="block">
          <path d="M8 14 22 3l13 9v17q0 4-4 4H12q-4 0-4-4z" fill="#1668b8" /><path d="M9 14 22 3l6 4-16 12z" fill="#2aa5ec" /><path d="M35 15v14q0 4-4 4H15z" fill="#35bdf0" /><path d="M19 22 35 11v6L22 27z" fill="#0b4c95" />
          <rect x="0" y="9" width="18" height="18" rx="2" fill="#0f6cbd" />
          <circle cx="9" cy="18" r="4" fill="none" stroke="#fff" strokeWidth="2.300" />
        </svg>
      ),
    },
    { icon: <EdgeLogo size={36} />, run: true },
    {
      icon: (
        <span className="relative block">
          <FaWhatsapp size={40} color="#25d366" />
          <span className="absolute -top-[5px] left-[13px] flex h-6 w-10 items-center justify-center rounded-[10px] bg-[#ff4d94] text-[17px] text-black"><Fit t="99+" w={28} /></span>
        </span>
      ), run: true,
    },
    {
      icon: (
        <svg width="36" height="36" viewBox="0 0 36 36" className="block">
          <path d="M14 1h8l1.500 5 4 2.300 5-1.300 3.500 6-3.500 3.700v2.600L36 23l-3.500 6-5-1.300-4 2.300L22 35h-8l-1.500-5-4-2.300-5 1.300L0 23l3.500-3.700v-2.600L0 13l3.500-6 5 1.300 4-2.300z" fill="#7d878b" />
          <circle cx="18" cy="18" r="9" fill="#f0f0f0" /><circle cx="18" cy="18" r="6.200" fill="#1062bd" />
        </svg>
      ), run: true,
    },
  ];
  const tray: React.ReactNode[] = [
    <svg key="p" width="22" height="22" viewBox="0 0 22 22"><rect x=".7" y=".7" width="20.600" height="20.600" fill="#5a524c" stroke="#e5e0da" strokeWidth="1.400" /><rect x="4" y="4" width="4" height="9" fill="#e0352b" /><rect x="8" y="4" width="3" height="9" fill="#f6d321" /><rect x="11" y="4" width="3.500" height="9" fill="#41b549" /><rect x="14.500" y="4" width="3.500" height="9" fill="#2b8ae0" /><path d="M4 15.500h3v3H4zM9.500 15.500h3v3h-3zM15 15.500h3v3h-3z" fill="#ddd" /></svg>,
    <SiNvidia key="n" size={19} color="#6fb344" />,
    <span key="l" className="flex h-[21px] w-[21px] items-center justify-center bg-[#1c71f5] text-[17px] font-bold text-white">L</span>,
    <Ico key="u" w={24}><rect x="7" y="1" width="9" height="5.500" /><path d="M18 15V7H5v14a2 2 0 0 0 2 2h8M15 20l2.500 3 5.500-7M10 3.800h.01M13 3.800h.01" /></Ico>,
    <svg key="g" width="24" height="24" viewBox="0 0 24 24"><rect x=".7" y=".7" width="22.600" height="22.600" fill="#4d4d4d" stroke="#9a9a9a" strokeWidth="1.400" /><path d="M3 5h18M3 8h18M3 11h18M3 14h18M3 17h18M3 20h18" stroke="#a8a8a8" strokeWidth="1.500" strokeDasharray="1.500 .7" /></svg>,
    <svg key="s" width="24" height="24" viewBox="0 0 24 24"><path d="M11 0q5 3.500 11 3.500V11q0 8-11 12.500Q0 19 0 11V3.500Q6 3.500 11 0z" fill="#1592e0" /><path d="M11 0v11H0V3.500Q6 3.500 11 0z" fill="#49c5f4" /><path d="M11 11h11q0 8-11 12.500z" fill="#0a5cae" /><circle cx="17" cy="17.500" r="6.500" fill="#128a22" /><path d="m14 17.500 2.200 2.200 4-4" stroke="#fff" strokeWidth="1.500" fill="none" /></svg>,
    <span key="b" className="flex h-6 w-[18px] items-center justify-center rounded-[9px] bg-[#0a84ff] text-white"><LuBluetooth size={18} /></span>,
    <svg key="o" width="24" height="17" viewBox="0 0 24 17"><path d="M5 16A5 5 0 0 1 5 6.500 8 8 0 0 1 18 5a5.500 5.500 0 0 1 1 11z" fill="#1592e0" /><path d="M5 6.500A8 8 0 0 1 18 5l-8 6z" fill="#0a62b5" /><path d="M3 15.500 14 9l8 5q-1 2-3 2H5z" fill="#3cb8f0" /></svg>,
  ];
  return (
    <div className="flex h-[71px] border-t border-[#333] bg-[#202020] text-white">
      <div className="flex items-center pl-[17px]">
        <div className="mr-[4px] -mt-1 flex h-[60px] w-[62px] items-center justify-center rounded-lg border border-[#333] bg-[#2d2d2d]">
          <div className="grid h-9 w-9 grid-cols-2 gap-[1.500px]">
            <i className="rounded-tl-sm bg-[#6fd3fb]" /><i className="rounded-tr-sm bg-[#5cc8fb]" /><i className="rounded-bl-sm bg-[#52c2fb]" /><i className="rounded-br-sm bg-[#22aaf3]" />
          </div>
        </div>
        {apps.map((a, i) => (
          <div key={i} className="relative -mt-1 flex h-[60px] w-[66px] items-center justify-center">
            {a.icon}
            {a.run && <i className="absolute bottom-[1px] h-[5px] w-[9px] rounded-full bg-[#9a9a9a]" />}
          </div>
        ))}
      </div>
      <div className="ml-auto flex items-center pb-[2px]">
        {tray.map((n, i) => <span key={i} className="flex w-12 items-center justify-center">{n}</span>)}
        <Fit t="ENG" w={34} className="ml-[16px] text-[17.500px]" />
        <Ico w={26} className="ml-[27px]"><path d="M15 3H3.500A2.500 2.500 0 0 0 1 5.500v10A2.500 2.500 0 0 0 3.500 18H17M8 18v4.500M5 22.500h15M12 18v4.500M20 11v11.500" /><rect x="17" y="1" width="6" height="5" rx="1" /><path d="M17 6h6v2.500L20 11l-3-2.500z" /></Ico>
        <Ico w={24} className="ml-[10px]"><path d="M1 9v6h4l6 5V4L5 9zM14 8.500q2.500 3.500 0 7" /><path d="M17 5.500q5 6.500 0 13M20 3q6.500 9 0 18" stroke="#6a6a6a" /></Ico>
        <Ico w={26} className="ml-3"><rect x="4" y="6" width="16" height="13" rx="2.500" /><path d="M8 9h9v7H7z" fill="currentColor" /><path d="M22 10.500v4" strokeWidth="3" /><path d="M5 1 1 8h4l-1.500 6L9 6H5.500L7 1z" fill="currentColor" stroke="#202020" strokeWidth=".8" /></Ico>
        <div className="mr-[30px] ml-[24px] flex flex-col items-end text-[17px] leading-6">
          <Fit t="10.57.34" w={67} />
          <Fit t="17/01/2025" w={92} />
        </div>
      </div>
    </div>
  );
}

export default function App() {
  return (
    <div className="relative h-[1600px] w-[2560px] overflow-hidden bg-[#3b3b3b] font-['Open_Sans','Noto_Sans',sans-serif]">
      <TitleBar />
      <NavBar />
      <BookmarksBar />
      <div className="flex h-[1370px]">
        <SideRail />
        <Page />
      </div>
      <Taskbar />
      <UploadDialog />
      <i className="absolute top-[706px] left-[11px] h-[48px] w-6 rounded-l-lg border border-[#555] bg-[#464646] shadow-md" />
      <SearchFlyout />
    </div>
  );
}
